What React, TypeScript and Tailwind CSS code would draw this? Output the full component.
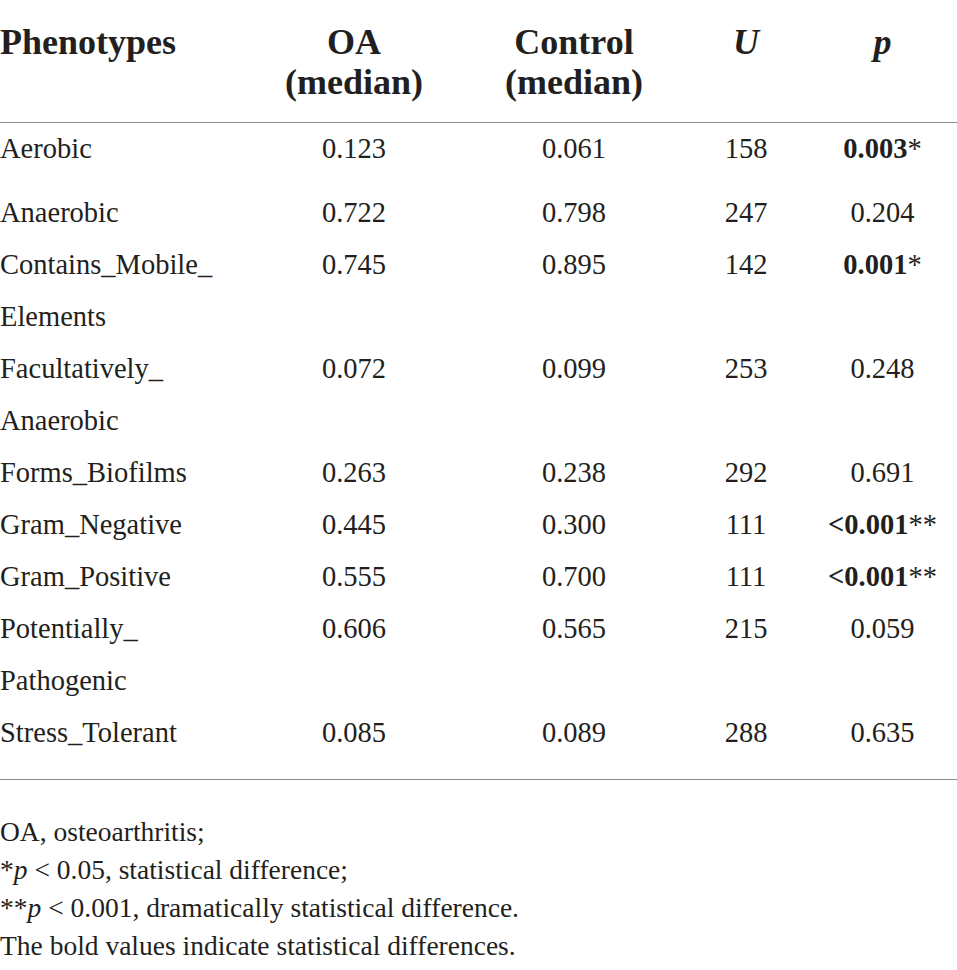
import React from 'react';

type Row = {
  name: string[];
  oa: string;
  control: string;
  u: string;
  p: string;
  star?: string;
  bold?: boolean;
  extra?: boolean;
};

const rows: Row[] = [
  { name: ['Aerobic'], oa: '0.123', control: '0.061', u: '158', p: '0.003', star: '*', bold: true, extra: true },
  { name: ['Anaerobic'], oa: '0.722', control: '0.798', u: '247', p: '0.204' },
  { name: ['Contains_Mobile_', 'Elements'], oa: '0.745', control: '0.895', u: '142', p: '0.001', star: '*', bold: true },
  { name: ['Facultatively_', 'Anaerobic'], oa: '0.072', control: '0.099', u: '253', p: '0.248' },
  { name: ['Forms_Biofilms'], oa: '0.263', control: '0.238', u: '292', p: '0.691' },
  { name: ['Gram_Negative'], oa: '0.445', control: '0.300', u: '111', p: '<0.001', star: '**', bold: true },
  { name: ['Gram_Positive'], oa: '0.555', control: '0.700', u: '111', p: '<0.001', star: '**', bold: true },
  { name: ['Potentially_', 'Pathogenic'], oa: '0.606', control: '0.565', u: '215', p: '0.059' },
  { name: ['Stress_Tolerant'], oa: '0.085', control: '0.089', u: '288', p: '0.635' },
];

const cols = 'grid grid-cols-[244px_220px_220px_124px_149px]';

const App = () => {
  return (
    <div className="w-[957px] min-h-[970px] bg-white text-[#231f20] font-['Liberation_Serif',serif]">
      {/* Header */}
      <div className={`${cols} pt-[22px] pb-[20px] text-[36px] leading-[40px] font-bold border-b border-[#8c8c8c]`}>
        <div>Phenotypes</div>
        <div className="text-center">OA<br />(median)</div>
        <div className="text-center">Control<br />(median)</div>
        <div className="text-center italic">U</div>
        <div className="text-center italic">p</div>
      </div>

      {/* Body */}
      <div className="text-[28.5px] leading-[52px] pb-[20px] border-b border-[#8c8c8c]">
        {rows.map((r, i) => (
          <div key={i} className={`${cols} ${r.extra ? 'pb-[12px]' : ''}`}>
            <div>
              {r.name.map((n, j) => (
                <div key={j}>{n}</div>
              ))}
            </div>
            <div className="text-center">{r.oa}</div>
            <div className="text-center">{r.control}</div>
            <div className="text-center">{r.u}</div>
            <div className="text-center whitespace-nowrap">
              <span className={r.bold ? 'font-bold' : ''}>{r.p}</span>
              {r.star && <span>{r.star}</span>}
            </div>
          </div>
        ))}
      </div>

      {/* Footnotes */}
      <div className="pt-[33px] text-[27.5px] leading-[38px]">
        <div>OA, osteoarthritis;</div>
        <div>
          *<span className="italic">p</span> &lt; 0.05, statistical difference;
        </div>
        <div>
          **<span className="italic">p</span> &lt; 0.001, dramatically statistical difference.
        </div>
        <div>The bold values indicate statistical differences.</div>
      </div>
    </div>
  );
};

export default App;
